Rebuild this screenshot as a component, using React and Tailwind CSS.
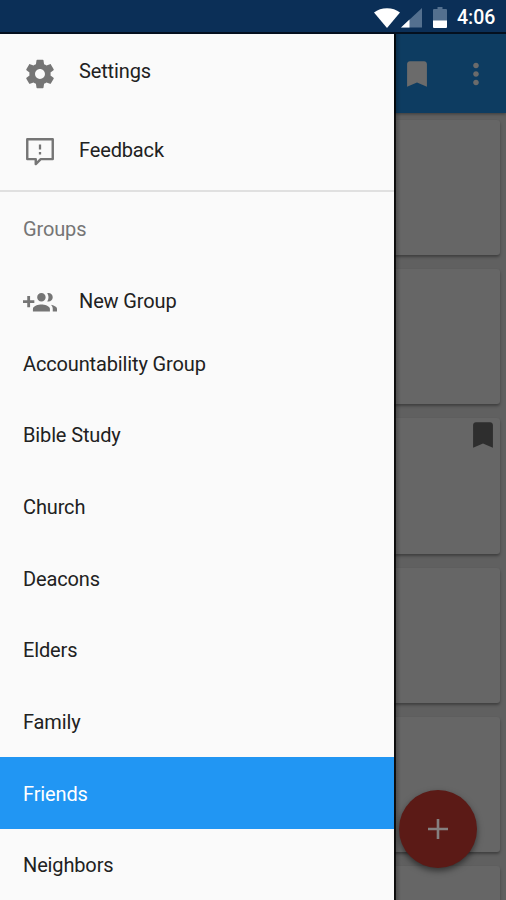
import React from "react";

const Icon = ({ d, className = "", children }) => (
  <svg viewBox="0 0 24 24" className={`block h-[34px] w-[34px] shrink-0 fill-current ${className}`}>
    {d ? <path d={d} /> : children}
  </svg>
);

const GEAR =
  "M19.43 12.98c.04-.32.07-.64.07-.98s-.03-.66-.07-.98l2.11-1.65c.19-.15.24-.42.12-.64l-2-3.46c-.12-.22-.39-.3-.61-.22l-2.49 1c-.52-.4-1.08-.73-1.69-.98l-.38-2.65C14.46 2.18 14.25 2 14 2h-4c-.25 0-.46.18-.49.42l-.38 2.65c-.61.25-1.17.59-1.69.98l-2.49-1c-.23-.09-.49 0-.61.22l-2 3.46c-.13.22-.07.49.12.64l2.11 1.65c-.04.32-.07.65-.07.98s.03.66.07.98l-2.11 1.65c-.19.15-.24.42-.12.64l2 3.46c.12.22.39.3.61.22l2.49-1c.52.4 1.08.73 1.69.98l.38 2.65c.03.24.24.42.49.42h4c.25 0 .46-.18.49-.42l.38-2.65c.61-.25 1.17-.59 1.69-.98l2.49 1c.23.09.49 0 .61-.22l2-3.46c.12-.22.07-.49-.12-.64l-2.11-1.65zM12 15.5c-1.93 0-3.5-1.57-3.5-3.5s1.57-3.5 3.5-3.5 3.5 1.57 3.5 3.5-1.57 3.5-3.5 3.5z";
const GROUP_ADD =
  "M8 10H5V7H3v3H0v2h3v3h2v-3h3v-2zm10 1c1.66 0 2.99-1.34 2.99-3S19.66 5 18 5c-.32 0-.63.05-.91.14.57.81.9 1.79.9 2.86s-.34 2.04-.9 2.86c.28.09.59.14.91.14zm-5 0c1.66 0 2.99-1.34 2.99-3S14.66 5 13 5c-1.66 0-3 1.34-3 3s1.34 3 3 3zm6.62 2.16c.83.73 1.38 1.66 1.38 2.84v2h3v-2c0-1.54-2.37-2.49-4.38-2.84zM13 13c-2 0-6 1-6 3v2h12v-2c0-2-4-3-6-3z";
const BOOKMARK = "M17 3H7c-1.1 0-1.99.9-1.99 2L5 21l7-3 7 3V5c0-1.1-.9-2-2-2z";
const MORE =
  "M12 8c1.1 0 2-.9 2-2s-.9-2-2-2-2 .9-2 2 .9 2 2 2zm0 2c-1.1 0-2 .9-2 2s.9 2 2 2 2-.9 2-2-.9-2-2-2zm0 6c-1.1 0-2 .9-2 2s.9 2 2 2 2-.9 2-2-.9-2-2-2z";

const groups = ["Accountability Group", "Bible Study", "Church", "Deacons", "Elders", "Family", "Friends", "Neighbors"];

function StatusBar() {
  return (
    <header className="flex h-[34px] shrink-0 items-center justify-end border-b-2 border-[#04101f] bg-[#0b2f57] pr-[11px] pt-[3px] text-white">
      <svg viewBox="0 0 26 20" className="block h-5 w-[26px] fill-white">
        <path d="M0 4.6C3.6 1.6 8 .2 13 .2s9.400 1.400 13 4.400L13 20z" />
      </svg>
      <svg viewBox="0 0 21 20" className="ml-[1px] block h-5 w-[21px]">
        <path d="M21 0v19.500H0z" fill="#54708f" />
        <path d="M8.500 11.600v7.900H0z" fill="#fff" />
      </svg>
      <svg viewBox="0 0 14 21" className="ml-[11px] block h-[21px] w-[14px]">
        <path d="M4.500 0h5v2H13a1 1 0 0 1 1 1v11H0V3a1 1 0 0 1 1-1h3.500z" fill="#54708f" />
        <path d="M0 13.500h14V20a1 1 0 0 1-1 1H1a1 1 0 0 1-1-1z" fill="#fff" />
      </svg>
      <span className="ml-[10px] w-[38px] whitespace-nowrap text-[19.500px] font-medium leading-5">4:06</span>
    </header>
  );
}

function Drawer() {
  return (
    <nav className="relative z-10 flex w-[394px] shrink-0 flex-col overflow-hidden bg-[#fafafa] text-[20px] tracking-[-0.140px] text-[#212121]">
      <div className="flex h-[78px] shrink-0 items-center pl-[23px]">
        <Icon d={GEAR} className="mt-px text-[#757575]" />
        <span className="ml-[22px] -mt-[5px]">Settings</span>
      </div>
      <div className="flex h-[78px] shrink-0 items-center pl-[23px]">
        <Icon className="mt-[2px] text-[#757575]">
          <path d="M3 3h18v14h-8.500L9 20.500V17H3z" fill="none" stroke="currentColor" strokeWidth="1.700" strokeLinejoin="round" />
          <path d="M11.200 6.700h1.600v3.600h-1.600zM11.200 12h1.600v1.700h-1.600z" />
        </Icon>
        <span className="ml-[22px] -mt-[3px]">Feedback</span>
      </div>
      <div className="h-[2px] shrink-0 bg-[#e0e0e0]" />
      <div className="flex h-[73px] shrink-0 items-center pl-[23px] text-[#757575]">Groups</div>
      <div className="flex h-[62px] shrink-0 items-center pl-[23px] pt-[14px]">
        <Icon d={GROUP_ADD} className="text-[#757575]" />
        <span className="ml-[22px] -mt-[5px]">New Group</span>
      </div>
      <ul>
        {groups.map((name) => (
          <li
            key={name}
            className={`flex h-[71.670px] items-center pl-[23px] pt-[2px] ${name === "Friends" ? "bg-[#2196f3] text-white" : ""}`}
          >
            {name}
          </li>
        ))}
      </ul>
    </nav>
  );
}

function Card({ marked }) {
  return (
    <div className="flex h-[135.400px] shrink-0 justify-end rounded-r-[3px] bg-[#666] shadow-[0_2px_3px_rgba(0,0,0,0.35)]">
      {marked && <Icon d={BOOKMARK} className="text-[#2e2e2e]" />}
    </div>
  );
}

export default function App() {
  return (
    <div className="relative flex h-[900px] w-[506px] flex-col overflow-hidden bg-[#606060] font-[Roboto,sans-serif]">
      <StatusBar />
      <div className="flex min-h-0 flex-1">
        <Drawer />
        <main className="flex min-w-0 flex-1 flex-col overflow-hidden">
          <div className="relative flex h-[79px] shrink-0 items-center bg-[#0d3c61] pl-[6px] text-[#6b6b6b] shadow-[0_1px_3px_rgba(0,0,0,0.4)]">
            <Icon d={BOOKMARK} />
            <Icon d={MORE} className="ml-[25px]" />
          </div>
          <div className="flex flex-col gap-[14px] pr-[6px] pt-[6.500px]">
            <Card />
            <Card />
            <Card marked />
            <Card />
            <Card />
            <Card />
          </div>
        </main>
      </div>
      <div className="absolute left-[394px] top-[34px] z-20 h-[866px] w-[7px] bg-[linear-gradient(to_right,rgba(0,0,0,0.9)_0px,rgba(0,0,0,0.85)_1.500px,rgba(0,0,0,0.22)_2px,transparent_7px)]" />
      <button className="absolute left-[399px] top-[789.500px] z-30 flex h-[78px] w-[78px] items-center justify-center rounded-full bg-[#5b1a16] shadow-[0_3px_6px_rgba(0,0,0,0.5)]">
        <svg viewBox="0 0 20 20" className="h-5 w-5 fill-[#858080]">
          <path d="M8.700 0h2.600v8.700H20v2.600h-8.700V20H8.700v-8.700H0V8.700h8.700z" />
        </svg>
      </button>
    </div>
  );
}
